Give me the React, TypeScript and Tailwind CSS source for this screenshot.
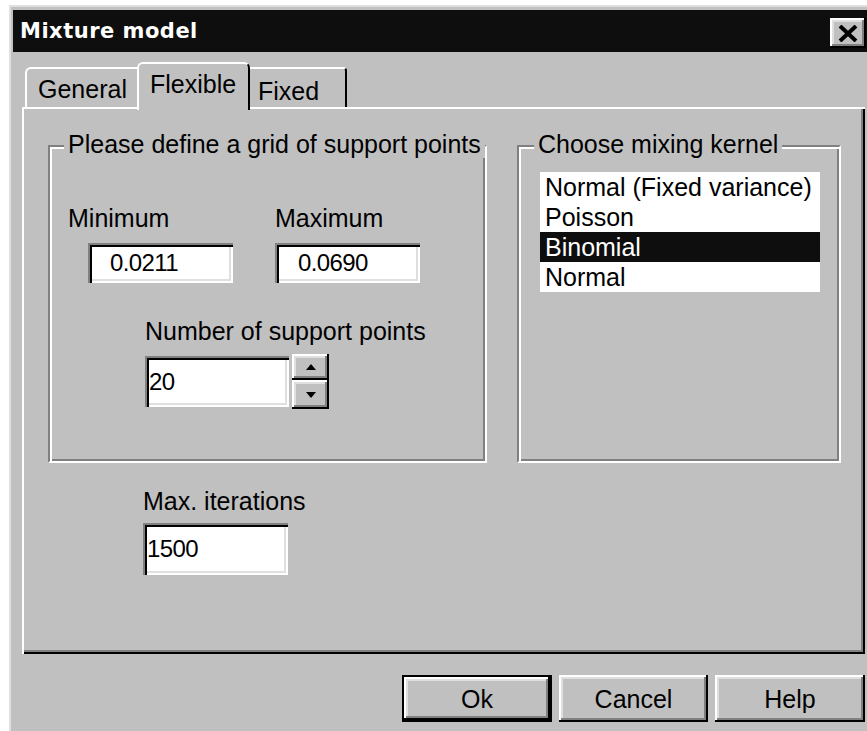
import React from 'react';

const raised =
  'shadow-[inset_-2px_-2px_0_#000,inset_2px_2px_0_#fff,inset_-4px_-4px_0_#808080,inset_4px_4px_0_#dfdfdf]';
const sunken =
  'shadow-[inset_2px_2px_0_#808080,inset_4px_4px_0_#000,inset_-2px_-2px_0_#fff,inset_-4px_-4px_0_#dfdfdf]';
const etched =
  'border-2 border-t-[#808080] border-l-[#808080] border-b-white border-r-white shadow-[inset_2px_2px_0_#fff,inset_-2px_-2px_0_#808080]';

function Field({ value, className }: { value: string; className: string }) {
  return (
    <div className={`flex items-center bg-white text-[24px] tracking-[-0.6px] ${sunken} ${className}`}>
      {value}
    </div>
  );
}

function Arrow({ up }: { up?: boolean }) {
  return (
    <svg width="10" height="6" viewBox="0 0 10 6">
      <path d={up ? 'M0 6 L5 0 L10 6 Z' : 'M0 0 L5 6 L10 0 Z'} fill="#000" />
    </svg>
  );
}

function Button({ label, width, isDefault }: { label: string; width: string; isDefault?: boolean }) {
  return (
    <div className={`${width} h-[47px] ${isDefault ? 'border-2 border-black' : ''}`}>
      <div className={`w-full h-full flex items-center justify-center bg-[#c0c0c0] ${raised}`}>
        {label}
      </div>
    </div>
  );
}

export default function App() {
  const kernels = ['Normal (Fixed variance)', 'Poisson', 'Binomial', 'Normal'];

  return (
    <div className="w-[867px] h-[731px] overflow-hidden bg-white font-['Liberation_Sans',Arial,sans-serif] text-[25px] leading-[28px] text-black">
      <div className="ml-[9px] mt-[5px] w-[872px] h-[740px] bg-[#c0c0c0] border-l-2 border-t-2 border-[#dfdfdf] pl-[2px] pt-[3px]">
        {/* title bar */}
        <div className="h-[42px] bg-[#0e0e0e] flex pl-[7px]">
          <span className="self-center font-['DejaVu_Sans',sans-serif] font-bold text-[21px] tracking-[0.5px] text-white">
            Mixture model
          </span>
          <div className={`ml-auto mr-[15px] mt-[8px] w-[36px] h-[30px] bg-[#c0c0c0] flex items-center justify-center ${raised}`}>
            <svg width="20" height="17" viewBox="0 0 20 17">
              <path d="M2 1 L18 16 M18 1 L2 16" stroke="#000" strokeWidth="4" />
            </svg>
          </div>
        </div>

        <div className="pl-[9px]">
          {/* tabs */}
          <div className="relative z-10 mt-[10px] h-[45px] flex items-end pl-[3px]">
            <div className="w-[112px] h-[40px] border-t-2 border-l-2 border-white rounded-tl-[6px] pl-[11px] pt-[6px]">
              General
            </div>
            <div className="w-[113px] h-[48px] -mb-[3px] bg-[#c0c0c0] border-t-2 border-l-2 border-white border-r-2 border-r-black rounded-t-[6px] pl-[11px] pt-[6px]">
              Flexible
            </div>
            <div className="w-[97px] h-[40px] border-t-2 border-white border-r-2 border-r-black rounded-tr-[4px] pl-[8px] pt-[8px]">
              Fixed
            </div>
          </div>

          {/* tab page */}
          <div className="w-[843px] h-[547px] pt-[38px] pl-[26px] shadow-[inset_2px_2px_0_#fff,inset_-2px_-2px_0_#000,inset_-4px_-4px_0_#808080]">
            <div className="flex gap-[30px]">
              <div className={`relative w-[439px] h-[318px] ${etched}`}>
                <span className="absolute left-[14px] top-[-17px] px-[4px] bg-[#c0c0c0] whitespace-nowrap">
                  Please define a grid of support points
                </span>
                <div className="flex mt-[57px]">
                  <div className="ml-[18px] w-[207px]">
                    <div>Minimum</div>
                    <Field value="0.0211" className="mt-[11px] ml-[20px] w-[145px] h-[40px] pl-[22px]" />
                  </div>
                  <div>
                    <div>Maximum</div>
                    <Field value="0.0690" className="mt-[11px] w-[145px] h-[40px] pl-[23px]" />
                  </div>
                </div>
                <div className="mt-[34px] ml-[95px]">
                  <div>Number of support points</div>
                  <div className="flex mt-[11px]">
                    <Field value="20" className="w-[144px] h-[51px] pl-[4px]" />
                    <div className="ml-[3px] -mt-[2px] w-[37px] flex flex-col">
                      <div className={`h-[26px] flex items-center justify-center bg-[#c0c0c0] ${raised}`}>
                        <Arrow up />
                      </div>
                      <div className={`h-[29px] flex items-center justify-center bg-[#c0c0c0] ${raised}`}>
                        <Arrow />
                      </div>
                    </div>
                  </div>
                </div>
              </div>

              <div className={`relative w-[324px] h-[318px] ${etched}`}>
                <span className="absolute left-[15px] top-[-17px] px-[4px] bg-[#c0c0c0] whitespace-nowrap">
                  Choose mixing kernel
                </span>
                <div className="mt-[25px] ml-[21px] w-[280px] bg-white">
                  {kernels.map((k, i) => (
                    <div
                      key={k}
                      className={`h-[30px] leading-[30px] pl-[5px] whitespace-nowrap ${i === 2 ? 'bg-[#0e0e0e] text-white' : ''}`}
                    >
                      {k}
                    </div>
                  ))}
                </div>
              </div>
            </div>

            <div className="mt-[24px] ml-[95px]">
              <div>Max. iterations</div>
              <Field value="1500" className="mt-[8px] w-[145px] h-[52px] pl-[4px]" />
            </div>
          </div>

          {/* dialog buttons */}
          <div className="w-[843px] mt-[21px] flex justify-end gap-[7px]">
            <Button label="Ok" width="w-[150px]" isDefault />
            <Button label="Cancel" width="w-[149px]" />
            <Button label="Help" width="w-[150px]" />
          </div>
        </div>
      </div>
    </div>
  );
}
